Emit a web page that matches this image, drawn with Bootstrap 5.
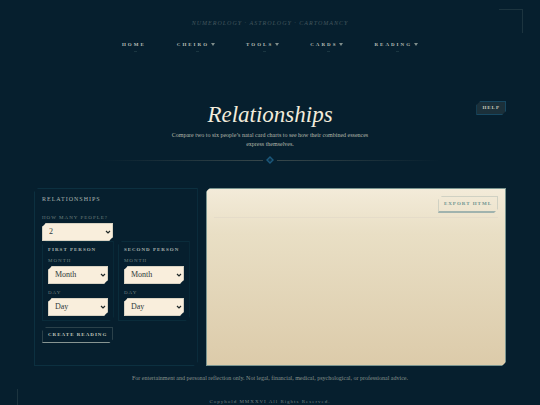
<!DOCTYPE html>
<html lang="en">
<head>
<meta charset="utf-8">
<meta name="viewport" content="width=device-width, initial-scale=1">
<title>Relationships</title>
<link href="https://cdn.jsdelivr.net/npm/bootstrap@5.3.0/dist/css/bootstrap.min.css" rel="stylesheet">
<style>
:root{--cut:4px}
body{background:#061f2e;color:#b5b9ac;font-family:"Liberation Serif","Times New Roman",serif;font-size:6px;line-height:9px}
.page{padding:20px 34px 0}
.tagline{color:#42565d;font-size:6px;line-height:7px;letter-spacing:1px;font-style:italic}
.site-nav{gap:31px;margin-top:13px}
.site-nav .nav-link{padding:0;color:#b9bfb8;font-size:5px;font-weight:700;line-height:10px;letter-spacing:2px;position:relative}
.site-nav .nav-link::after{content:"";position:absolute;left:50%;bottom:-2px;width:3px;height:1px;background:#1a3641}
.tri{display:inline-block;border:2px solid transparent;border-top:3px solid #7f8d8b;border-bottom:0;margin-left:2px}
.hero{margin-top:49px}
.hero h1{font-size:23px;line-height:32px;font-style:italic;font-weight:400;color:#f2ecdc;margin:0}
.intro{max-width:208px}
.chamfer{clip-path:polygon(var(--cut) 0,100% 0,100% calc(100% - var(--cut)),calc(100% - var(--cut)) 100%,0 100%,0 var(--cut))}
.act{font-family:inherit;font-size:5px;line-height:8px;letter-spacing:1px;border-radius:0;font-weight:700}
.help{position:absolute;right:0;top:2px;padding:2px 5px;background:#1b303a;border:1px solid #174861;color:#c5c9bd}
.rule{gap:3px;padding:0 66px;margin-top:7px}
.rule i{flex:1;height:1px;background:linear-gradient(90deg,transparent,#37474a)}
.rule i:last-child{background:linear-gradient(270deg,transparent,#37474a)}
.work{display:grid;grid-template-columns:6fr 11fr;gap:8px;margin-top:24px}
.panel{border:1px solid #0c3040;padding:6px 7px 22px}
.panel h2,.person legend{font-size:5px;line-height:8px;letter-spacing:1px;font-weight:700;color:#aab5b0;margin:0}
.panel h2{font-size:6px;font-weight:400;margin-bottom:11px}
.panel label{display:block;clear:both;color:#70807f;font-size:5px;line-height:8px;letter-spacing:1px;margin-bottom:1px}
.people{display:grid;grid-template-columns:1fr 1fr;gap:4px}
.person{border:1px solid #0a2c3b;padding:4px 5px 4px}
.person legend{margin-bottom:3px;white-space:nowrap}
.pick{height:18px;border:1px solid #d8d2c2;border-radius:0;padding:0 6px;font:8px/16px "Liberation Serif",serif;color:#303a3a;background:#f9eedc url("data:image/svg+xml,%3Csvg xmlns='http://www.w3.org/2000/svg' viewBox='0 0 6 6'%3E%3Cpath d='M1 2l2 2 2-2' fill='none' stroke='%23202828' stroke-width='1.2'/%3E%3C/svg%3E") no-repeat right 1px center/6px}
.many{width:48%}
.person .pick+label{margin-top:5px}
.line-btn{background:transparent;border:1px solid #2b414a;border-bottom-color:#879592;color:#c4c8bd;padding:3px 5px}
.create{margin-top:6px}
.sheet{background:linear-gradient(#f3ebd9,#e9dfc5 25%,#dccbaa);border:1px solid #7b9590;padding:7px}
.sheet-head{border-bottom:1px solid #e5dcc9;padding-bottom:4px}
.export{border:1px solid #d0d1c3;border-bottom:2px solid #a0b3ae;color:#6f9490}
.legal{margin-top:8px;color:#87928c}
.copy{font-size:5px;line-height:7px;letter-spacing:1px;margin-top:15px;color:#718080}
.corner-tr,.corner-bl{position:absolute;width:24px;height:24px;border:0 solid #1c343f}
.corner-tr{right:17px;top:9px;border-width:1px 1px 0 0}
.corner-bl{left:17px;bottom:-8px;border-width:0 0 1px 1px}
.stage{min-height:100vh;overflow:hidden}
</style>
</head>
<body>
<div class="stage position-relative">
<span class="corner-tr"></span><span class="corner-bl"></span>
<div class="page">
<header>
<div class="tagline text-center">NUMEROLOGY · ASTROLOGY · CARTOMANCY</div>
<nav class="site-nav nav justify-content-center" aria-label="Main">
<a class="nav-link" href="#">HOME</a>
<a class="nav-link" href="#">CHEIRO<span class="tri"></span></a>
<a class="nav-link" href="#">TOOLS<span class="tri"></span></a>
<a class="nav-link" href="#">CARDS<span class="tri"></span></a>
<a class="nav-link" href="#">READING<span class="tri"></span></a>
</nav>
</header>
<main>
<section class="hero position-relative text-center">
<h1>Relationships</h1>
<p class="intro mx-auto mb-0">Compare two to six people’s natal card charts to see how their combined essences express themselves.</p>
<button type="button" class="help act chamfer">HELP</button>
<div class="rule d-flex align-items-center"><i></i><svg width="8" height="8" viewBox="0 0 8 8" aria-hidden="true"><path d="M4 1l3 3-3 3-3-3z" fill="#0b2d42" stroke="#1b587b" stroke-width="1.4"/></svg><i></i></div>
</section>
<div class="work">
<form class="panel chamfer">
<h2>RELATIONSHIPS</h2>
<label for="many">HOW MANY PEOPLE?</label>
<select id="many" class="pick form-select chamfer many"><option>2</option><option>3</option><option>4</option><option>5</option><option>6</option></select>
<div class="people">
<fieldset class="person chamfer"><legend>FIRST PERSON</legend>
<label for="m1">MONTH</label><select id="m1" class="pick form-select chamfer"><option>Month</option></select>
<label for="d1">DAY</label><select id="d1" class="pick form-select chamfer"><option>Day</option></select></fieldset>
<fieldset class="person chamfer"><legend>SECOND PERSON</legend>
<label for="m2">MONTH</label><select id="m2" class="pick form-select chamfer"><option>Month</option></select>
<label for="d2">DAY</label><select id="d2" class="pick form-select chamfer"><option>Day</option></select></fieldset>
</div>
<button type="button" class="line-btn act chamfer create d-block">CREATE READING</button>
</form>
<section class="sheet chamfer"><div class="sheet-head d-flex justify-content-end"><button type="button" class="line-btn export act chamfer">EXPORT HTML</button></div></section>
</div>
<p class="legal text-center mb-0">For entertainment and personal reflection only. Not legal, financial, medical, psychological, or professional advice.</p>
</main>
<footer class="copy text-center">Copyhold MMXXVI All Rights Reserved.</footer>
</div>
</div>
<script src="https://cdn.jsdelivr.net/npm/bootstrap@5.3.0/dist/js/bootstrap.bundle.min.js"></script>
</body>
</html>
